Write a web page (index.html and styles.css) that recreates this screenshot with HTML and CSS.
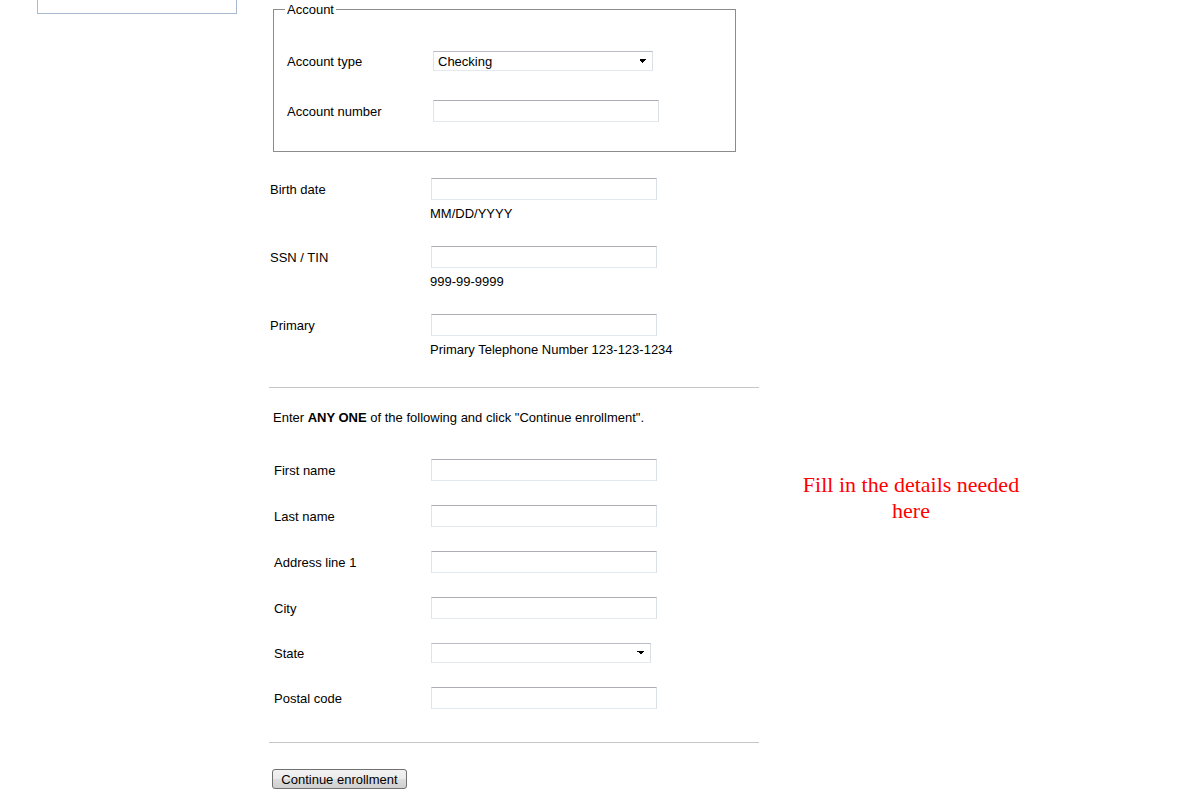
FILE: index.html
```html
<!DOCTYPE html>
<html>
<head>
    <meta charset="utf-8"/>
    <title>Online enrollment</title>
    <link rel="stylesheet" href="styles.css">
</head>
<body>
<div class="page">
    <!--left menu box (scrolled off the top)-->
    <div class="sideBox"></div>

    <form class="enrollForm" action="#">
        <fieldset class="accountSet">
            <legend>Account</legend>
            <div class="accRow">
                <label for="accType">Account type</label>
                <select id="accType" class="selBox">
                    <option>Checking</option>
                    <option>Savings</option>
                </select>
            </div>
            <div class="accRow">
                <label for="accNum">Account number</label>
                <input id="accNum" type="text" class="txtBox">
            </div>
        </fieldset>

        <div class="idSection">
            <div class="idRow">
                <label for="birthDate">Birth date</label>
                <div class="field">
                    <input id="birthDate" type="text" class="txtBox">
                    <div class="hint">MM/DD/YYYY</div>
                </div>
            </div>
            <div class="idRow">
                <label for="ssn">SSN / TIN</label>
                <div class="field">
                    <input id="ssn" type="text" class="txtBox">
                    <div class="hint">999-99-9999</div>
                </div>
            </div>
            <div class="idRow">
                <label for="phone">Primary</label>
                <div class="field">
                    <input id="phone" type="text" class="txtBox">
                    <div class="hint">Primary Telephone Number 123-123-1234</div>
                </div>
            </div>
        </div>

        <hr class="line">

        <p class="intro">Enter <b>ANY ONE</b> of the following and click "Continue enrollment".</p>

        <div class="anySection">
            <div class="anyRow">
                <label for="firstName">First name</label>
                <input id="firstName" type="text" class="txtBox">
            </div>
            <div class="anyRow">
                <label for="lastName">Last name</label>
                <input id="lastName" type="text" class="txtBox">
            </div>
            <div class="anyRow">
                <label for="addr1">Address line 1</label>
                <input id="addr1" type="text" class="txtBox">
            </div>
            <div class="anyRow">
                <label for="city">City</label>
                <input id="city" type="text" class="txtBox">
            </div>
            <div class="anyRow">
                <label for="state">State</label>
                <select id="state" class="selBox">
                    <option></option>
                </select>
            </div>
            <div class="anyRow">
                <label for="postal">Postal code</label>
                <input id="postal" type="text" class="txtBox">
            </div>
        </div>

        <hr class="line lineBottom">

        <input type="button" class="continueBtn" value="Continue enrollment">
    </form>

    <div class="note">Fill in the details needed here</div>
</div>
</body>
</html>
```

FILE: styles.css
```css
body {
    margin: 0;
    font-family: "Liberation Sans", Arial, sans-serif;
    font-size: 13px;
    color: #000;
    background: #fff;
}

.page {
    display: flex;
    align-items: flex-start;
}

.sideBox {
    box-sizing: border-box;
    width: 200px;
    height: 14px;
    margin-left: 37px;
    border: 1px solid #a7bad0;
    border-top: 0;
}

.enrollForm {
    width: 490px;
    margin-left: 32px;
}

/* inputs */
.txtBox {
    box-sizing: border-box;
    width: 226px;
    height: 22px;
    margin: 0 0 0 1px;
    padding: 0 3px;
    border: 1px solid;
    border-color: #abadb3 #dbdfe6 #e3e9ef #e2e3ea;
    font: 13px "Liberation Sans", Arial, sans-serif;
}

.selBox {
    -webkit-appearance: none;
    appearance: none;
    box-sizing: border-box;
    width: 220px;
    height: 20px;
    margin: 0 0 0 1px;
    padding: 0 0 0 4px;
    border: 1px solid;
    border-color: #b9bcc3 #dbdfe6 #e3e9ef #e2e3ea;
    border-radius: 0;
    color: #000;
    font: 13px "Liberation Sans", Arial, sans-serif;
    background-color: #fff;
    background-image: linear-gradient(45deg, transparent 50%, #000 50%),
                      linear-gradient(135deg, #000 50%, transparent 50%);
    background-size: 4px 4px, 4px 4px;
    background-position: right 9px center, right 5px center;
    background-repeat: no-repeat;
}

/* account fieldset */
.accountSet {
    box-sizing: border-box;
    width: 463px;
    margin: 1px 0 0 4px;
    padding: 33px 0 29px 13px;
    border: 1px solid #8c8c8c;
}

.accountSet legend {
    margin-left: -2px;
    padding: 0 2px;
    line-height: 17px;
}

.accRow {
    display: flex;
    align-items: center;
}

.accRow + .accRow {
    margin-top: 29px;
}

.accRow label {
    width: 145px;
    line-height: 15px;
}

/* id rows with hints */
.idSection {
    margin-top: 26px;
}

.idRow {
    display: flex;
    align-items: flex-start;
}

.idRow + .idRow {
    margin-top: 25px;
}

.idRow label {
    width: 160px;
    padding: 1px 0 0 1px;
    line-height: 22px;
}

.hint {
    margin-top: 6px;
    line-height: 15px;
}

.line {
    height: 0;
    margin: 30px 0 0;
    border: 0;
    border-top: 1px solid #c6c6c6;
}

.lineBottom {
    margin-top: 33px;
}

.intro {
    margin: 22px 0 0 4px;
    line-height: 15px;
}

/* any one of */
.anySection {
    margin-top: 34px;
    padding-left: 5px;
}

.anyRow {
    display: flex;
    align-items: center;
}

.anyRow + .anyRow {
    margin-top: 24px;
}

.anyRow label {
    width: 156px;
    line-height: 15px;
}

.continueBtn {
    box-sizing: border-box;
    width: 135px;
    height: 20px;
    margin: 26px 0 0 3px;
    padding: 0;
    border: 1px solid #707070;
    border-radius: 3px;
    background: linear-gradient(#f2f2f2 0%, #ebebeb 50%, #dddddd 50%, #cfcfcf 100%);
    color: #000;
    font: 13px "Liberation Sans", Arial, sans-serif;
}

.note {
    width: 240px;
    margin-left: 32px;
    padding-top: 472px;
    text-align: center;
    color: #f00;
    font-family: "Liberation Serif", "Times New Roman", serif;
    font-size: 22px;
}
```
